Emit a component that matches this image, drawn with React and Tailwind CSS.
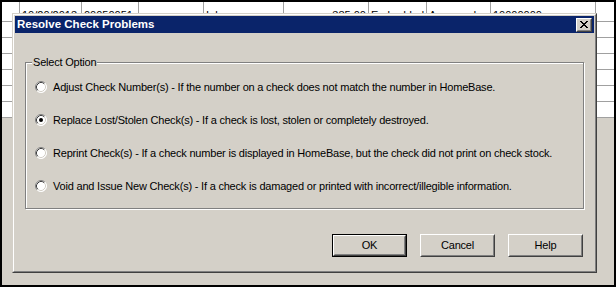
import React from 'react';

const cols = [
  { text: '' },
  { text: '10/20/2013' },
  { text: '00050051' },
  { text: '' },
  { text: 'Ink' },
  { text: '385.00', right: true },
  { text: 'Embedded' },
  { text: 'Approved' },
  { text: '10000000' },
  { text: '', last: true },
];

const options = [
  { label: 'Adjust Check Number(s) - If the number on a check does not match the number in HomeBase.' },
  { label: 'Replace Lost/Stolen Check(s) - If a check is lost, stolen or completely destroyed.', checked: true },
  { label: 'Reprint Check(s) - If a check number is displayed in HomeBase, but the check did not print on check stock.' },
  { label: 'Void and Issue New Check(s) - If a check is damaged or printed with incorrect/illegible information.' },
];

function Radio({ checked }) {
  return (
    <svg width="12" height="12" viewBox="0 0 12 12" className="shrink-0">
      <circle cx="6" cy="6" r="5.5" fill="#ffffff" />
      <path d="M2.11 9.89 A5.5 5.5 0 0 1 9.89 2.11" fill="none" stroke="#808080" strokeWidth="1" />
      <path d="M9.89 2.11 A5.5 5.5 0 0 1 2.11 9.89" fill="none" stroke="#ffffff" strokeWidth="1" />
      <path d="M2.82 9.18 A4.5 4.5 0 0 1 9.18 2.82" fill="none" stroke="#404040" strokeWidth="1" />
      <path d="M9.18 2.82 A4.5 4.5 0 0 1 2.82 9.18" fill="none" stroke="#d4d0c8" strokeWidth="1" />
      {checked && <circle cx="6" cy="6" r="2" fill="#000000" />}
    </svg>
  );
}

function Button({ children, isDefault }) {
  const face = (
    <div className="h-full border border-t-white border-l-white border-r-[#404040] border-b-[#404040]">
      <div className="h-full border border-t-[#d4d0c8] border-l-[#d4d0c8] border-r-[#808080] border-b-[#808080] flex items-center justify-center text-[11px] leading-[11px] tracking-[-0.2px] text-black">
        {children}
      </div>
    </div>
  );
  if (isDefault) {
    return <div className="w-[75px] h-[23px] border border-black">{face}</div>;
  }
  return <div className="w-[75px] h-[23px]">{face}</div>;
}

export default function App() {
  return (
    <div className="relative w-[616px] h-[287px] border-2 border-black bg-[#d4d0c8] overflow-hidden font-['Liberation_Sans',Arial,sans-serif]">
      {/* Spreadsheet behind the dialog, first row cut off by the dialog's top edge */}
      <div className="grid grid-cols-[18px_62px_57px_65px_80px_85px_58px_64px_105px_18px] bg-white">
        {cols.map((c, i) => (
          <div
            key={`r0-${i}`}
            className={`h-[20px] border-b border-[#a0a0a0] pt-[8px] px-[2px] ${c.last ? '' : 'border-r'}`}
          >
            <div className={`h-[3px] overflow-hidden flex text-[11px] leading-[11px] text-black ${c.right ? 'justify-end' : ''}`}>
              {c.text}
            </div>
          </div>
        ))}
        {[1, 2, 3, 4, 5, 6].map((r) =>
          cols.map((c, i) => (
            <div
              key={`r${r}-${i}`}
              className={`h-[16px] border-b border-[#a0a0a0] ${c.last ? '' : 'border-r'}`}
            />
          ))
        )}
      </div>

      {/* Dialog */}
      <div className="absolute left-[10px] top-[11px] w-[585px] h-[260px] border border-t-[#d4d0c8] border-l-[#d4d0c8] border-r-[#404040] border-b-[#404040] bg-[#d4d0c8]">
        <div className="h-full border border-t-white border-l-white border-r-[#808080] border-b-[#808080] p-[1px] flex flex-col">
          {/* Title bar */}
          <div className="h-[17px] bg-[#0a246a] flex items-center justify-between pl-[2px] pr-[2px]">
            <span className="text-white font-bold text-[11.5px] leading-[11px]">Resolve Check Problems</span>
            <div className="w-[16px] h-[14px] bg-[#d4d0c8] border border-t-white border-l-white border-r-[#404040] border-b-[#404040]">
              <div className="h-full border border-t-[#d4d0c8] border-l-[#d4d0c8] border-r-[#808080] border-b-[#808080] flex items-center justify-center">
                <svg width="8" height="7" viewBox="0 0 8 7">
                  <path d="M0 0h2v1h-2z M6 0h2v1h-2z M1 1h2v1h-2z M5 1h2v1h-2z M2 2h4v1h-4z M3 3h2v1h-2z M2 4h4v1h-4z M1 5h2v1h-2z M5 5h2v1h-2z M0 6h2v1h-2z M6 6h2v1h-2z" fill="#000000" />
                </svg>
              </div>
            </div>
          </div>

          {/* Group box */}
          <div className="relative mt-[29px] ml-[10px] w-[559px] h-[147px] border border-[#808080] shadow-[1px_1px_0_#ffffff,inset_1px_1px_0_#ffffff]">
            <span className="absolute left-[6px] top-[-7px] px-[1px] bg-[#d4d0c8] text-[11px] leading-[13px] tracking-[-0.2px] text-black">
              Select Option
            </span>
            <div className="flex flex-col gap-[21px] pt-[18px] pl-[9px]">
              {options.map((o) => (
                <div key={o.label} className="flex items-center gap-[6px] h-[12px]">
                  <Radio checked={o.checked} />
                  <span className="text-[11px] leading-[12px] tracking-[-0.2px] text-black whitespace-nowrap">{o.label}</span>
                </div>
              ))}
            </div>
          </div>

          {/* Buttons */}
          <div className="flex justify-end gap-[13px] mt-[25px] mr-[11px]">
            <Button isDefault>OK</Button>
            <Button>Cancel</Button>
            <Button>Help</Button>
          </div>
        </div>
      </div>
    </div>
  );
}
